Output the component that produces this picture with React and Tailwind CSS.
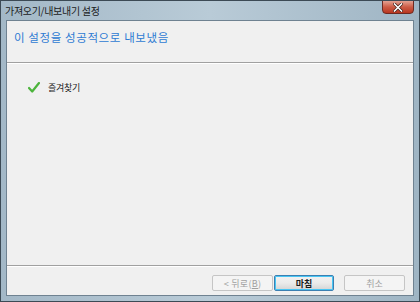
import React from "react";

const font = { fontFamily: '"Noto Sans CJK KR", "Noto Sans", sans-serif' };

const App = () => {
  return (
    <div
      className="w-[420px] h-[302px] flex flex-col border border-[#3c4a55] bg-gradient-to-r from-[#a3b8c7] via-[#b9cbd7] to-[#9fb5c4] overflow-hidden"
      style={font}
    >
      {/* Title bar */}
      <div className="relative h-[19px] flex items-center pl-[4px]">
        <span className="text-[10px] tracking-[-0.3px] text-[#1b1b1b] leading-none">
          가져오기/내보내기 설정
        </span>
        {/* Close button */}
        <div className="absolute right-[5px] top-[-1px] w-[32px] h-[14px] rounded-b-[4px] border border-[#6d2a22] bg-gradient-to-b from-[#e3a192] via-[#cc5b45] to-[#b8361f] flex items-center justify-center">
          <svg width="10" height="9" viewBox="0 0 10 9">
            <path d="M1.5 1 L8.5 8 M8.5 1 L1.5 8" stroke="#3a1a14" strokeWidth="3" strokeLinecap="square" />
            <path d="M1.5 1 L8.5 8 M8.5 1 L1.5 8" stroke="#ffffff" strokeWidth="1.6" strokeLinecap="square" />
          </svg>
        </div>
      </div>

      {/* Client area */}
      <div className="flex-1 flex flex-col mx-[5px] mb-[5px] border border-[#6f8291] bg-[#f0f0f0]">
        {/* Header */}
        <div className="h-[41px] pl-[7px] pt-[6px]">
          <div className="text-[11.5px] tracking-[0.6px] text-[#2e7bd3] leading-[20px]">
            이 설정을 성공적으로 내보냈음
          </div>
        </div>
        <div className="h-[2px] border-t border-[#a0a0a0] border-b border-b-white" />

        {/* Body */}
        <div className="flex-1 pl-[21px] pt-[18px]">
          <div className="flex items-center gap-[8px]">
            <svg width="12" height="11" viewBox="0 0 12 11">
              <path d="M1 6 L4.2 9.5 L11 1" fill="none" stroke="#4cb43c" strokeWidth="2.2" strokeLinecap="round" strokeLinejoin="round" />
            </svg>
            <span className="text-[9px] tracking-[-0.3px] text-[#1e1e1e] leading-none">즐겨찾기</span>
          </div>
        </div>

        <div className="h-[2px] border-t border-[#a0a0a0] border-b border-b-white" />

        {/* Footer */}
        <div className="h-[28px] flex items-start justify-end pt-[8px] pr-[8px]">
          <div className="w-[61px] h-[16px] mr-[1px] rounded-[2px] border border-[#c5c5c5] bg-[#f4f4f4] flex items-center justify-center text-[9px] tracking-[0.3px] text-[#a0a0a0] leading-none">
            &lt; 뒤로(<span className="underline">B</span>)
          </div>
          <div className="w-[60px] h-[16px] rounded-[2px] border border-[#3c7fb1] bg-gradient-to-b from-[#f2f2f2] via-[#ebebeb] to-[#d4d4d4] shadow-[inset_0_0_0_1px_#48c6f4] flex items-center justify-center text-[9px] font-bold text-[#1a1a1a] leading-none">
            마침
          </div>
          <div className="w-[61px] h-[16px] ml-[10px] rounded-[2px] border border-[#c5c5c5] bg-[#f4f4f4] flex items-center justify-center text-[9px] text-[#a0a0a0] leading-none">
            취소
          </div>
        </div>
      </div>
    </div>
  );
};

export default App;
